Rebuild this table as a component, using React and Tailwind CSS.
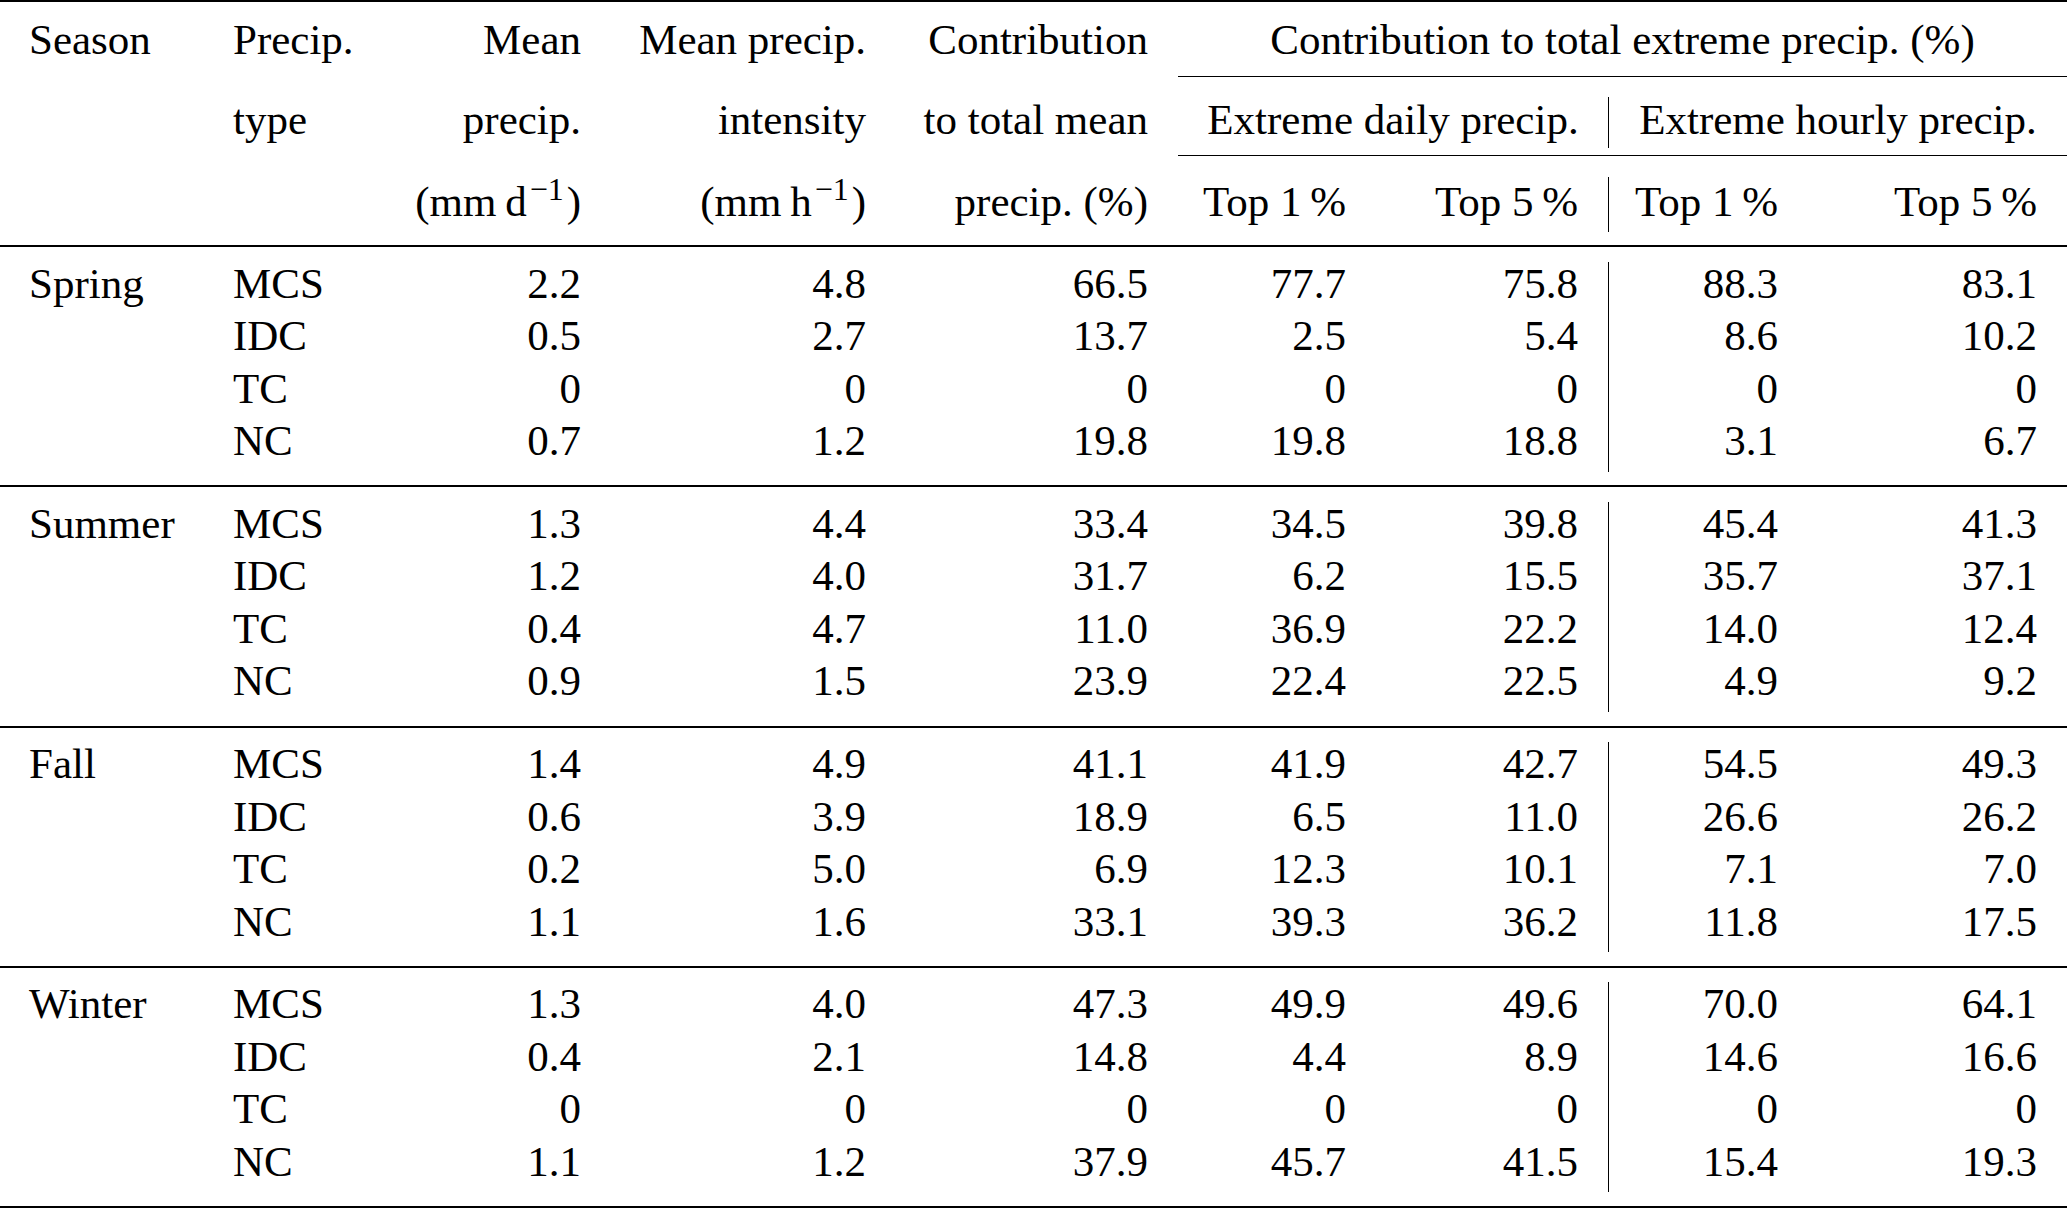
import React from "react";

const COLS = "grid grid-cols-[203px_178px_230px_285px_282px_198px_232px_200px_259px]";

const groups = [
  {
    season: "Spring",
    rows: [
      ["MCS", "2.2", "4.8", "66.5", "77.7", "75.8", "88.3", "83.1"],
      ["IDC", "0.5", "2.7", "13.7", "2.5", "5.4", "8.6", "10.2"],
      ["TC", "0", "0", "0", "0", "0", "0", "0"],
      ["NC", "0.7", "1.2", "19.8", "19.8", "18.8", "3.1", "6.7"],
    ],
  },
  {
    season: "Summer",
    rows: [
      ["MCS", "1.3", "4.4", "33.4", "34.5", "39.8", "45.4", "41.3"],
      ["IDC", "1.2", "4.0", "31.7", "6.2", "15.5", "35.7", "37.1"],
      ["TC", "0.4", "4.7", "11.0", "36.9", "22.2", "14.0", "12.4"],
      ["NC", "0.9", "1.5", "23.9", "22.4", "22.5", "4.9", "9.2"],
    ],
  },
  {
    season: "Fall",
    rows: [
      ["MCS", "1.4", "4.9", "41.1", "41.9", "42.7", "54.5", "49.3"],
      ["IDC", "0.6", "3.9", "18.9", "6.5", "11.0", "26.6", "26.2"],
      ["TC", "0.2", "5.0", "6.9", "12.3", "10.1", "7.1", "7.0"],
      ["NC", "1.1", "1.6", "33.1", "39.3", "36.2", "11.8", "17.5"],
    ],
  },
  {
    season: "Winter",
    rows: [
      ["MCS", "1.3", "4.0", "47.3", "49.9", "49.6", "70.0", "64.1"],
      ["IDC", "0.4", "2.1", "14.8", "4.4", "8.9", "14.6", "16.6"],
      ["TC", "0", "0", "0", "0", "0", "0", "0"],
      ["NC", "1.1", "1.2", "37.9", "45.7", "41.5", "15.4", "19.3"],
    ],
  },
];

function Sup() {
  return (
    <span className="text-[32px] leading-[0] align-[16px] ml-[3px] mr-[3px]">−1</span>
  );
}

function Header() {
  const r1 = "row-start-1 pt-[15.5px] whitespace-nowrap";
  const r3 = "row-start-3 pt-[21.25px] whitespace-nowrap";
  const r5 = "row-start-5 pt-[23.75px] whitespace-nowrap";
  return (
    <div className={`${COLS} grid-rows-[74px_1px_78px_1px_89px]`}>
      {/* row 1 */}
      <div className={`col-start-1 pl-[29px] ${r1}`}>Season</div>
      <div className={`col-start-2 pl-[30px] ${r1}`}>Precip.</div>
      <div className={`col-start-3 pr-[30px] text-right ${r1}`}>Mean</div>
      <div className={`col-start-4 pr-[30px] text-right ${r1}`}>Mean precip.</div>
      <div className={`col-start-5 pr-[30px] text-right ${r1}`}>Contribution</div>
      <div className={`col-start-6 col-span-4 text-center ${r1}`}>
        Contribution to total extreme precip. (%)
      </div>
      {/* cmidrule */}
      <div className="col-start-6 col-span-4 row-start-2 bg-black" />
      {/* row 2 */}
      <div className={`col-start-2 pl-[30px] ${r3}`}>type</div>
      <div className={`col-start-3 pr-[30px] text-right ${r3}`}>precip.</div>
      <div className={`col-start-4 pr-[30px] text-right ${r3}`}>intensity</div>
      <div className={`col-start-5 pr-[30px] text-right ${r3}`}>to total mean</div>
      <div className="col-start-6 col-span-2 row-start-3 pt-[20px] whitespace-nowrap">
        <div className="h-[51px] pt-[1.25px] text-center">Extreme daily precip.</div>
      </div>
      <div className="col-start-8 col-span-2 row-start-3 pt-[20px] whitespace-nowrap">
        <div className="h-[51px] pt-[1.25px] text-center border-l-[1.5px] border-black">
          Extreme hourly precip.
        </div>
      </div>
      {/* cmidrule */}
      <div className="col-start-6 col-span-4 row-start-4 bg-black" />
      {/* row 3 */}
      <div className={`col-start-3 pr-[30px] text-right ${r5}`}>
        (mm{"\u2009"}d<Sup />)
      </div>
      <div className={`col-start-4 pr-[30px] text-right ${r5}`}>
        (mm{"\u2009"}h<Sup />)
      </div>
      <div className={`col-start-5 pr-[30px] text-right ${r5}`}>precip. (%)</div>
      {["Top 1\u2009%", "Top 5\u2009%", "Top 1\u2009%", "Top 5\u2009%"].map((t, i) => (
        <div
          key={i}
          className={`row-start-5 pt-[21px] whitespace-nowrap ${
            ["col-start-6", "col-start-7", "col-start-8", "col-start-9"][i]
          }`}
        >
          <div
            className={`h-[55px] pt-[2.75px] pr-[30px] text-right ${
              i === 2 ? "border-l-[1.5px] border-black" : ""
            }`}
          >
            {t}
          </div>
        </div>
      ))}
    </div>
  );
}

function Group({ season, rows }) {
  return (
    <div className={`${COLS} auto-rows-[52.5px] pt-[14.5px] pb-[13.75px]`}>
      {rows.map((r, ri) => (
        <React.Fragment key={ri}>
          <div className="pl-[29px] whitespace-nowrap">{ri === 0 ? season : ""}</div>
          <div className="pl-[30px] whitespace-nowrap">{r[0]}</div>
          {r.slice(1).map((v, ci) => (
            <div
              key={ci}
              className={`pr-[30px] text-right whitespace-nowrap ${
                ci === 5 ? "border-l-[1.5px] border-black" : ""
              }`}
            >
              {v}
            </div>
          ))}
        </React.Fragment>
      ))}
    </div>
  );
}

export default function App() {
  return (
    <div className="w-[2067px] min-h-[1208px] bg-white text-black font-['Liberation_Serif','Times_New_Roman',serif] text-[43px] leading-[44.5px]">
      <div className="h-[2px] bg-black" />
      <Header />
      <div className="h-[2px] bg-black" />
      {groups.map((g, i) => (
        <React.Fragment key={g.season}>
          <Group season={g.season} rows={g.rows} />
          <div className={i === groups.length - 1 ? "h-[3px] bg-black" : "h-[2px] bg-black"} />
        </React.Fragment>
      ))}
    </div>
  );
}
